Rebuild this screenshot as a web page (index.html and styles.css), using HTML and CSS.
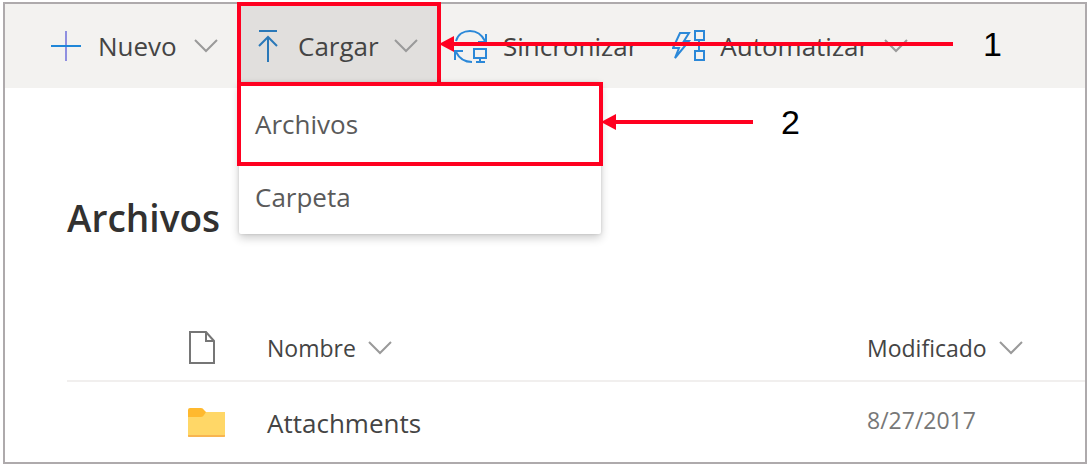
FILE: index.html
```html
<!DOCTYPE html>
<html lang="es">
<head>
    <meta charset="UTF-8">
    <title>Archivos</title>
    <meta name="viewport" content="width=device-width, initial-scale=1.0">
    <link rel="stylesheet" href="styles.css">
</head>
<body>
    <div class="frame">
        <nav class="toolbar">
            <button type="button" class="cmd cmd-new">
                <svg class="icon" width="32" height="32" viewBox="0 0 32 32"><path d="M16 1v30" stroke="#8f8fe0"/><path d="M1 16h30" stroke="#1f86d8"/></svg>
                <span>Nuevo</span>
                <svg class="chevron" width="26" height="14" viewBox="0 0 26 14"><path d="M2 1l11 11L24 1"/></svg>
            </button>

            <div class="upload">
                <button type="button" class="cmd cmd-upload">
                    <svg class="icon" width="20" height="34" viewBox="0 0 20 34" stroke="#2a78b8"><path d="M1 2h18M10 33V8M1 17l9-9 9 9"/></svg>
                    <span>Cargar</span>
                    <svg class="chevron" width="26" height="14" viewBox="0 0 26 14"><path d="M2 1l11 11L24 1"/></svg>
                </button>
                <div class="menu">
                    <button type="button" class="menu-item marked">Archivos</button>
                    <button type="button" class="menu-item">Carpeta</button>
                    <div class="callout callout-2"><i class="arrow"></i><span>2</span></div>
                </div>
                <div class="callout callout-1"><i class="arrow"></i><span>1</span></div>
            </div>

            <button type="button" class="cmd cmd-sync">
                <svg class="icon" width="36" height="34" viewBox="0 0 36 34" stroke="#2b88d8">
                    <path d="M3 12C5 5 11 2 17 2c7 0 12 4 15 10M33 5v8h-8M2 31v-9h8M3 23c3 6 8 10 16 10"/>
                    <path d="M21 20h12v9H21zM27 29v4M23 33h9"/>
                </svg>
                <span>Sincronizar</span>
            </button>

            <button type="button" class="cmd cmd-auto">
                <svg class="icon" width="34" height="34" viewBox="0 0 34 34" stroke="#2b88d8">
                    <path d="M8 4h9l-5 8h5L3 29l4-10H1z"/>
                    <path d="M23 2h9v9h-9zM23 22h9v9h-9zM27 11v11"/>
                </svg>
                <span>Automatizar</span>
                <svg class="chevron" width="26" height="14" viewBox="0 0 26 14"><path d="M2 1l11 11L24 1"/></svg>
            </button>
        </nav>

        <main class="library">
            <h1>Archivos</h1>
            <table class="files">
                <thead>
                    <tr>
                        <th class="col-type">
                            <svg class="file" width="28" height="34" viewBox="0 0 28 34"><path d="M2 1h16l8 9v22H2zM18 1v9h8"/></svg>
                        </th>
                        <th class="col-name">
                            Nombre
                            <svg class="chevron" width="26" height="14" viewBox="0 0 26 14"><path d="M2 1l11 11L24 1"/></svg>
                        </th>
                        <th class="col-date">
                            Modificado
                            <svg class="chevron" width="26" height="14" viewBox="0 0 26 14"><path d="M2 1l11 11L24 1"/></svg>
                        </th>
                    </tr>
                </thead>
                <tbody>
                    <tr>
                        <td class="col-type">
                            <svg width="37" height="30" viewBox="0 0 37 30">
                                <path d="M0 4h37v24a1 1 0 0 1-1 1H1a1 1 0 0 1-1-1z" fill="#ffd767"/>
                                <path d="M0 2q0-2 2-2h11q2 0 3 2l2 2-2 3q-1 2-3 2H0z" fill="#ffb92e"/>
                                <path d="M0 27h37v1a1 1 0 0 1-1 1H1a1 1 0 0 1-1-1z" fill="#f8b550"/>
                            </svg>
                        </td>
                        <td class="col-name">Attachments</td>
                        <td class="col-date">8/27/2017</td>
                    </tr>
                </tbody>
            </table>
        </main>
    </div>
</body>
</html>
```

FILE: styles.css
```css
* { box-sizing: border-box; }
body { margin: 2px 4px 2px 3px; background: #fff; color: #444; font-family: "Open Sans", "Noto Sans", sans-serif; font-size: 26px; line-height: 32px; }
button { font: inherit; color: inherit; background: none; border: none; padding: 0; cursor: pointer; text-align: left; }
svg { display: block; fill: none; }
.frame { border: 2px solid #aeaaac; }

.toolbar { display: flex; align-items: flex-start; height: 84px; background: #f3f2f0; }
.cmd { display: flex; align-items: center; height: 84px; white-space: nowrap; }
.icon { stroke-width: 2; flex: none; }
.chevron { stroke: #9a9a9a; stroke-width: 2; flex: none; }
.cmd-new { width: 232px; padding-left: 45px; gap: 16px; }
.cmd-sync { gap: 14px; margin-left: 12px; }
.cmd-auto { gap: 14px; margin-left: 34px; }

.upload { position: relative; z-index: 2; margin-top: -2px; border: 4px solid #ff0020; background: #e1dfdd; }
.cmd-upload { width: 196px; height: 76px; padding: 4px 0 0 17px; gap: 20px; }
.cmd-upload .chevron { margin-left: -6px; }
.menu { position: absolute; top: 76px; left: -2px; width: 362px; background: #fff; border-radius: 2px; box-shadow: 0 4px 10px #0003, 0 0 3px #0002; }
.menu-item { display: block; width: 100%; height: 68px; padding: 0 16px 6px; color: #5a5a5a; }
.marked { width: 366px; height: 84px; margin-left: -2px; padding: 0 14px; border: 4px solid #ff0020; }

/* numbered steps drawn over the page */
.callout { position: absolute; display: flex; align-items: center; color: #000; font: 34px/40px "Liberation Sans", Arial, sans-serif; pointer-events: none; }
.callout-1 { top: 18px; left: 100%; gap: 30px; margin-left: 4px; }
.callout-2 { top: 20px; left: 100%; gap: 28px; margin-left: 2px; }
.arrow { position: relative; width: 148px; height: 4px; margin-left: 2px; background: #ff0020; }
.callout-1 .arrow { width: 510px; }
.arrow::before { content: ""; position: absolute; left: -4px; top: -6px; border: solid transparent; border-width: 8px 15px 8px 0; border-right-color: #ff0020; }

.library { padding: 107px 0 0 62px; }
h1 { margin: 0; color: #323130; font-size: 37px; line-height: 46px; font-weight: 600; }
.files { width: 100%; margin-top: 74px; border-collapse: collapse; table-layout: fixed; }
th, td { padding: 0; font-weight: 400; text-align: left; vertical-align: middle; }
th { height: 66px; border-bottom: 2px solid #f1efee; font-size: 23px; }
td { height: 81px; padding-top: 2px; }
th .chevron { display: inline-block; margin-left: 5px; vertical-align: 2px; }
.col-type { width: 200px; padding-left: 121px; }
.col-date { width: 218px; }
td.col-date { padding-bottom: 6px; color: #777; font-size: 23px; }
.file { stroke: #767676; stroke-width: 2; }
```
